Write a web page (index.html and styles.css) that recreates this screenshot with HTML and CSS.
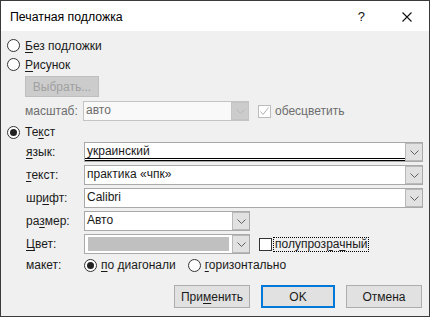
FILE: index.html
```html
<!DOCTYPE html>
<html lang="ru">

<head>
    <meta charset="UTF-8">
    <title>Печатная подложка</title>
    <link rel="stylesheet" href="styles.css">
</head>

<body>
    <div class="dialog">
        <div class="titlebar">
            <span class="title">Печатная подложка</span>
            <span class="help">?</span>
            <span class="close">
                <svg width="10" height="10" viewBox="0 0 10 10">
                    <path d="M0.5 0.5L9.5 9.5M9.5 0.5L0.5 9.5" stroke="#111" stroke-width="1.1" fill="none" />
                </svg>
            </span>
        </div>

        <div class="content">
            <div class="option"><span class="radio"></span><span><u>Б</u>ез подложки</span></div>
            <div class="option"><span class="radio"></span><span><u>Р</u>исунок</span></div>

            <div class="picture">
                <button class="btn btn-disabled">Выбрать...</button>
                <div class="field field-disabled">
                    <span class="field-label">масштаб:</span>
                    <div class="combo combo-short combo-disabled">
                        <span class="combo-value">авто</span>
                        <span class="combo-arrow">
                            <svg width="9" height="5" viewBox="0 0 9 5">
                                <path d="M0.5 0.5L4.5 4.5L8.5 0.5" stroke="#b8b8b8" fill="none" />
                            </svg>
                        </span>
                    </div>
                    <span class="check check-disabled">
                        <svg width="11" height="11" viewBox="0 0 11 11">
                            <path d="M1.5 5.5L4 8.5L9.5 1.5" stroke="#b0b0b0" fill="none" />
                        </svg>
                    </span>
                    <span class="check-label">обесцветить</span>
                </div>
            </div>

            <div class="option option-text"><span class="radio checked"></span><span>Те<u>к</u>ст</span></div>

            <div class="fields">
                <div class="field">
                    <span class="field-label"><u>я</u>зык:</span>
                    <div class="combo">
                        <span class="combo-value combo-focus">украинский</span>
                        <span class="combo-arrow">
                            <svg width="9" height="5" viewBox="0 0 9 5">
                                <path d="M0.5 0.5L4.5 4.5L8.5 0.5" stroke="#606060" fill="none" />
                            </svg>
                        </span>
                    </div>
                </div>
                <div class="field">
                    <span class="field-label"><u>т</u>екст:</span>
                    <div class="combo">
                        <span class="combo-value">практика «чпк»</span>
                        <span class="combo-arrow">
                            <svg width="9" height="5" viewBox="0 0 9 5">
                                <path d="M0.5 0.5L4.5 4.5L8.5 0.5" stroke="#606060" fill="none" />
                            </svg>
                        </span>
                    </div>
                </div>
                <div class="field">
                    <span class="field-label">шр<u>и</u>фт:</span>
                    <div class="combo">
                        <span class="combo-value">Calibri</span>
                        <span class="combo-arrow">
                            <svg width="9" height="5" viewBox="0 0 9 5">
                                <path d="M0.5 0.5L4.5 4.5L8.5 0.5" stroke="#606060" fill="none" />
                            </svg>
                        </span>
                    </div>
                </div>
                <div class="field">
                    <span class="field-label">ра<u>з</u>мер:</span>
                    <div class="combo combo-short">
                        <span class="combo-value">Авто</span>
                        <span class="combo-arrow">
                            <svg width="9" height="5" viewBox="0 0 9 5">
                                <path d="M0.5 0.5L4.5 4.5L8.5 0.5" stroke="#606060" fill="none" />
                            </svg>
                        </span>
                    </div>
                </div>
                <div class="field">
                    <span class="field-label"><u>Ц</u>вет:</span>
                    <div class="combo combo-short">
                        <span class="combo-value"><span class="swatch"></span></span>
                        <span class="combo-arrow">
                            <svg width="9" height="5" viewBox="0 0 9 5">
                                <path d="M0.5 0.5L4.5 4.5L8.5 0.5" stroke="#606060" fill="none" />
                            </svg>
                        </span>
                    </div>
                    <span class="check"></span>
                    <span class="check-label focus-rect">полупроз<u>р</u>а<u>ч</u>ный</span>
                </div>
                <div class="field field-layout">
                    <span class="field-label">макет:</span>
                    <div class="option"><span class="radio checked"></span><span><u>п</u>о диагонали</span></div>
                    <div class="option"><span class="radio"></span><span><u>г</u>оризонтально</span></div>
                </div>
            </div>

            <div class="buttons">
                <button class="btn">При<u>м</u>енить</button>
                <button class="btn btn-default">OK</button>
                <button class="btn">Отмена</button>
            </div>
        </div>
    </div>
</body>

</html>
```

FILE: styles.css
```css
* {
    margin: 0;
    padding: 0;
    box-sizing: border-box;
    font-family: 'Segoe UI', 'Liberation Sans', sans-serif;
}

body {
    width: 430px;
    height: 317px;
    overflow: hidden;
    font-size: 12px;
    color: #1a1a1a;
}

.dialog {
    width: 430px;
    height: 317px;
    border: 1px solid #3a3a3a;
    display: flex;
    flex-direction: column;
    background-color: #f0f0f0;
}

.titlebar {
    height: 30px;
    background-color: #fff;
    display: flex;
    align-items: center;
    padding-left: 9px;
}

.title {
    flex-grow: 1;
    font-size: 12.3px;
    color: #000;
    padding-top: 1px;
}

.help {
    font-size: 13px;
    color: #111;
    margin-right: 37px;
    padding-top: 1px;
}

.close {
    display: flex;
    margin-right: 17px;
    padding-top: 2px;
}

.content {
    flex-grow: 1;
    padding: 5px 6px 0 6px;
}

u {
    text-decoration: underline;
    text-underline-offset: 2px;
}

/* radios */
.option {
    display: flex;
    align-items: center;
    height: 19px;
}

.radio {
    width: 13px;
    height: 13px;
    border: 1px solid #333;
    border-radius: 50%;
    background-color: #fff;
    margin-right: 5px;
    display: flex;
    align-items: center;
    justify-content: center;
}

.radio.checked::after {
    content: "";
    width: 7px;
    height: 7px;
    border-radius: 50%;
    background-color: #222;
}

.option-text {
    height: 20px;
    margin-top: 1px;
}

/* picture block */
.picture {
    padding-left: 18px;
}

.btn {
    height: 23px;
    width: 75px;
    border: 1px solid #adadad;
    background-color: #e1e1e1;
    font-size: 12px;
    color: #1a1a1a;
}

.btn-disabled {
    margin-top: 2px;
    width: 74px;
    height: 21px;
    border-color: #bfbfbf;
    background-color: #cccccc;
    color: #a0a0a0;
}

.btn-default {
    border: 2px solid #0078d7;
}

.field {
    display: flex;
    align-items: center;
    height: 20px;
}

.picture .field {
    margin-top: 4px;
}

.field-label {
    width: 58px;
    flex-shrink: 0;
}

.field-disabled {
    color: #6d6d6d;
}

.combo {
    width: 340px;
    height: 20px;
    border: 1px solid #a9a9a9;
    background-color: #fff;
    display: flex;
}

.combo-short {
    width: 166px;
}

.combo-disabled {
    border-color: #c4c4c4;
    background-color: #f9f9f9;
    color: #6d6d6d;
}

.combo-value {
    flex-grow: 1;
    padding: 0 2px;
    line-height: 17px;
    display: flex;
}

.combo-focus {
    border-bottom: 3px double #000;
    padding-top: 1px;
    line-height: 14px;
}

.combo-arrow {
    width: 17px;
    flex-shrink: 0;
    background-color: #e1e1e1;
    border: 1px solid #b9b9b9;
    border-right: none;
    display: flex;
    align-items: center;
    justify-content: center;
}

.combo-disabled .combo-arrow {
    background-color: #cccccc;
    border-color: #c4c4c4;
}

.swatch {
    flex-grow: 1;
    background-color: #c0c0c0;
    margin: 2px 1px;
}

.check {
    width: 13px;
    height: 13px;
    border: 1px solid #333;
    background-color: #fff;
    margin-left: 9px;
    margin-right: 2px;
    display: flex;
    align-items: center;
    justify-content: center;
}

.check-disabled {
    border-color: #bcbcbc;
    margin-right: 4px;
}

.focus-rect {
    outline: 1px dotted #000;
    padding: 0 1px;
    line-height: 13px;
}

/* text block */
.fields {
    padding-left: 19px;
    display: flex;
    flex-direction: column;
    gap: 3px;
}

.field-layout {
    height: 18px;
    gap: 0;
    margin-top: -1px;
}

.field-layout .option {
    margin-right: 12px;
}

.field-layout .radio {
    margin-right: 4px;
}

.buttons {
    display: flex;
    justify-content: flex-end;
    gap: 11px;
    margin-top: 11px;
    padding-right: 1px;
}

.buttons .btn {
    width: 76px;
}

.buttons .btn-default {
    width: 74px;
}
```
